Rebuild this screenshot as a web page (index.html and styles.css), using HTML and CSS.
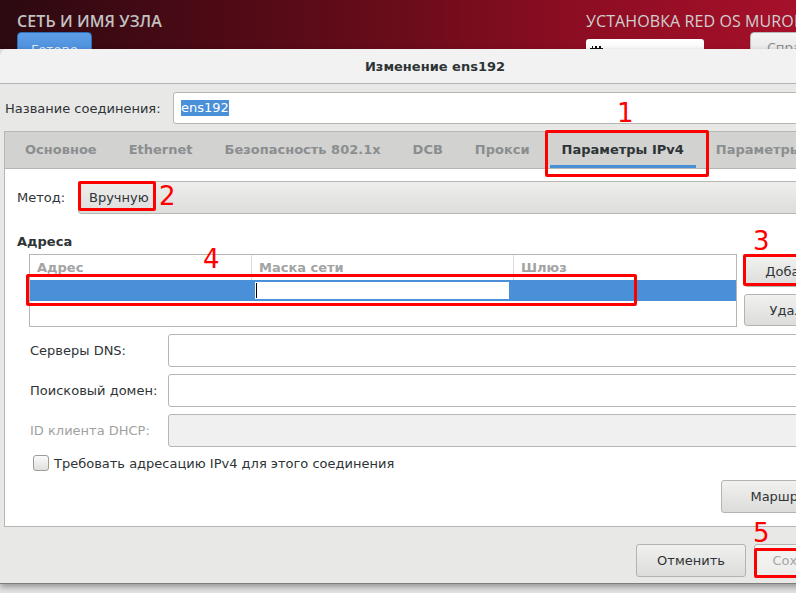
FILE: index.html
```html
<!DOCTYPE html>
<html lang="ru">
<head>
<meta charset="utf-8">
<title>Изменение ens192</title>
<link rel="stylesheet" href="styles.css">
</head>
<body>
<div class="screen">
  <header class="topbar">
    <div class="top-left">
      <div class="spoke-title">СЕТЬ И ИМЯ УЗЛА</div>
      <div class="done-btn">Готово</div>
    </div>
    <div class="top-right">
      <div class="install-title">УСТАНОВКА RED OS MURON 7.3</div>
      <div class="top-right-row">
        <div class="kbd-field"><span class="kbd-icon"></span></div>
        <div class="help-btn">Справка!</div>
      </div>
    </div>
  </header>

  <div class="dialog">
    <div class="titlebar">Изменение ens192</div>
    <div class="dialog-body">
      <div class="name-row">
        <label class="name-label">Название соединения:</label>
        <div class="entry name-entry"><span class="selected-text">ens192</span></div>
      </div>

      <div class="notebook">
        <div class="tabs">
          <div class="tab">Основное</div>
          <div class="tab">Ethernet</div>
          <div class="tab">Безопасность 802.1x</div>
          <div class="tab">DCB</div>
          <div class="tab">Прокси</div>
          <div class="tab active">Параметры IPv4</div>
          <div class="tab">Параметры IPv6</div>
        </div>
        <div class="page">
          <div class="method-row">
            <span class="method-label">Метод:</span>
            <div class="combo">Вручную</div>
          </div>

          <div class="section-title">Адреса</div>
          <div class="addr-block">
            <div class="addr-table">
              <div class="addr-head">
                <div class="col c1">Адрес</div>
                <div class="col c2">Маска сети</div>
                <div class="col c3">Шлюз</div>
              </div>
              <div class="addr-row">
                <div class="cell c1"></div>
                <div class="cell c2"><div class="cell-edit"><span class="caret"></span></div></div>
                <div class="cell c3"></div>
              </div>
            </div>
            <div class="addr-buttons">
              <button class="btn addr-btn">Добавить</button>
              <button class="btn addr-btn del">Удалить</button>
            </div>
          </div>

          <div class="field-row first">
            <span class="field-label">Серверы DNS:</span>
            <div class="entry field-entry"></div>
          </div>
          <div class="field-row">
            <span class="field-label">Поисковый домен:</span>
            <div class="entry field-entry"></div>
          </div>
          <div class="field-row">
            <span class="field-label disabled">ID клиента DHCP:</span>
            <div class="entry field-entry disabled"></div>
          </div>

          <div class="check-row">
            <span class="checkbox"></span>
            <span class="check-label">Требовать адресацию IPv4 для этого соединения</span>
          </div>

          <div class="routes-row">
            <button class="btn routes-btn">Маршруты</button>
          </div>
        </div>
      </div>

      <div class="actions">
        <button class="btn action-btn">Отменить</button>
        <button class="btn action-btn save">Сохранить</button>
      </div>
    </div>
  </div>

  <div class="mark box1"></div>
  <div class="num n1">1</div>
  <div class="mark box2"></div>
  <div class="num n2">2</div>
  <div class="mark box3"></div>
  <div class="num n3">3</div>
  <div class="mark box4"></div>
  <div class="num n4">4</div>
  <div class="mark box5"></div>
  <div class="num n5">5</div>
</div>
</body>
</html>
```

FILE: styles.css
```css
* { box-sizing: border-box; }
html, body { margin: 0; padding: 0; }
body {
  width: 796px;
  height: 593px;
  overflow: hidden;
  background: #e4e4e4;
  font-family: "DejaVu Sans", sans-serif;
  font-size: 13px;
  color: #2e3436;
}
button { font: inherit; margin: 0; }

.screen {
  position: relative;
  width: 796px;
  height: 593px;
  overflow: hidden;
}

/* ---------- installer header ---------- */
.topbar {
  height: 49px;
  overflow: hidden;
  display: flex;
  background: linear-gradient(90deg, #2c0910 0%, #4a0a15 25%, #6a0c1a 50%, #8c0d22 72%, #a6102a 100%);
}
.top-left {
  flex: none;
  width: 586px;
  padding: 11px 0 0 17px;
}
.spoke-title {
  font-family: "Open Sans", sans-serif;
  font-weight: 600;
  font-size: 16px;
  line-height: 20px;
  color: #c2c2c2;
  letter-spacing: 0.1px;
}
.done-btn {
  margin-top: 1px;
  width: 75px;
  height: 34px;
  border: 1px solid #2f6db5;
  border-radius: 4px;
  background: linear-gradient(#5d9ee6, #3f82d2);
  color: #dfe8f3;
  font-family: "Open Sans", sans-serif;
  font-size: 14px;
  line-height: 16px;
  padding-top: 9px;
  text-align: center;
}
.top-right {
  flex: 1;
  min-width: 0;
  padding-top: 11px;
  white-space: nowrap;
  overflow: hidden;
}
.install-title {
  font-family: "Open Sans", sans-serif;
  font-size: 16px;
  letter-spacing: 0.1px;
  line-height: 20px;
  color: #cfcfcf;
}
.top-right-row {
  display: flex;
  align-items: flex-start;
  margin-top: 1px;
}
.kbd-field {
  flex: none;
  margin-top: 7px;
  width: 118px;
  height: 30px;
  background: linear-gradient(#ffffff, #ededed);
  border-radius: 3px;
  padding: 7px 0 0 4px;
}
.kbd-icon {
  display: block;
  width: 13px;
  height: 8px;
  background: #111;
  border-top: 2px dotted #fff;
}
.help-btn {
  flex: none;
  margin-left: 46px;
  width: 90px;
  height: 34px;
  border: 1px solid #b8b8b8;
  border-radius: 4px;
  background: linear-gradient(#f4f4f4, #dedede);
  color: #8a8a8a;
  font-family: "Open Sans", sans-serif;
  font-size: 14px;
  line-height: 16px;
  padding: 7px 0 0 16px;
}

/* ---------- dialog ---------- */
.dialog {
  width: 870px;
  height: 535px;
  display: flex;
  flex-direction: column;
  background: #e8e8e7;
  border-radius: 7px 7px 0 0;
  border-bottom: 1px solid #7d7d7d;
  box-shadow: 0 3px 6px rgba(0, 0, 0, 0.35);
  position: relative;
}
.titlebar {
  height: 35px;
  flex: none;
  background: #f2f2f2;
  border-radius: 7px 7px 0 0;
  border-bottom: 1px solid #b4b4b4;
  text-align: center;
  font-weight: 700;
  font-size: 13px;
  line-height: 36px;
  color: #2e3436;
}
.dialog-body {
  flex: 1;
  display: flex;
  flex-direction: column;
  padding-top: 8px;
}

.name-row {
  display: flex;
  align-items: center;
  height: 32px;
  padding-left: 5px;
  padding-right: 6px;
}
.name-label { width: 168px; }
.entry {
  background: #fff;
  border: 1px solid #b6b6b3;
  border-radius: 3px;
}
.name-entry {
  flex: 1;
  height: 32px;
  padding-left: 7px;
  display: flex;
  align-items: center;
}
.selected-text {
  background: #4a90d9;
  color: #fff;
  line-height: 16px;
}

/* ---------- notebook ---------- */
.notebook {
  margin: 7px 4px 0 4px;
  border: 1px solid #b6b6b3;
  display: flex;
  flex-direction: column;
}
.tabs {
  height: 37px;
  display: flex;
  gap: 8px;
  padding-left: 8px;
  background: #d2d2d1;
  border-bottom: 1px solid #b6b6b3;
  overflow: hidden;
  white-space: nowrap;
}
.tab {
  padding: 0 12px;
  line-height: 36px;
  font-weight: 700;
  color: #8b8e8f;
  flex: none;
}
.tab.active {
  color: #2e3436;
  box-shadow: inset 0 -3px 0 #4a90d9;
}
.page {
  height: 357px;
  background: #fff;
  padding: 12px 12px 0 12px;
  display: flex;
  flex-direction: column;
}

.method-row {
  display: flex;
  align-items: center;
  height: 33px;
}
.method-label { width: 61px; }
.combo {
  flex: 1;
  height: 33px;
  border: 1px solid #b6b6b3;
  border-radius: 3px;
  background: linear-gradient(#eeeeed, #dddddc);
  padding-left: 10px;
  line-height: 31px;
}

.section-title {
  margin-top: 19px;
  font-weight: 700;
  line-height: 17px;
}

.addr-block {
  margin-top: 4px;
  margin-left: 12px;
  display: flex;
  gap: 7px;
}
.addr-table {
  width: 708px;
  height: 73px;
  border: 1px solid #b6b6b3;
  background: #fff;
}
.addr-head {
  display: flex;
  height: 25px;
}
.col {
  font-weight: 700;
  color: #a2a4a4;
  line-height: 25px;
  padding-left: 7px;
}
.c1 { width: 221px; }
.c2 { width: 262px; }
.c3 { flex: 1; }
.col.c2, .col.c3 { border-left: 1px solid #dcdcdc; }
.addr-row {
  display: flex;
  height: 21px;
  background: #4a90d9;
}
.cell.c2 { padding: 2px 3px 2px 4px; }
.cell-edit {
  background: #fff;
  height: 17px;
  width: 254px;
  padding: 1px 0 0 1px;
}
.caret {
  display: block;
  width: 1px;
  height: 15px;
  background: #000;
}
.addr-buttons {
  padding-top: 2px;
  display: flex;
  flex-direction: column;
  gap: 7px;
}
.btn {
  border: 1px solid #b3b3b0;
  border-radius: 3px;
  background: linear-gradient(#f1f1f0, #dcdcdb);
  color: #2e3436;
  text-align: center;
  padding: 0;
}
.addr-btn { width: 108px; height: 31px; }
.addr-btn.del { height: 32px; }

.field-row {
  display: flex;
  align-items: center;
  height: 33px;
  margin-top: 7px;
  padding-left: 13px;
}
.field-label { width: 138px; }
.field-label.disabled { color: #a0a2a2; }
.field-entry { flex: 1; height: 33px; }
.field-entry.disabled { background: #f0f0f0; }

.check-row {
  margin-top: 8px;
  padding-left: 16px;
  display: flex;
  align-items: center;
  height: 16px;
  gap: 5px;
}
.checkbox {
  width: 16px;
  height: 16px;
  border: 1px solid #9c9c9a;
  border-radius: 3px;
  background: linear-gradient(#fafafa, #e0e0df);
}

.routes-row {
  margin-top: 9px;
  display: flex;
  justify-content: flex-end;
}
.routes-btn { width: 132px; height: 33px; }

.actions {
  display: flex;
  justify-content: flex-end;
  gap: 8px;
  padding: 17px 6px 0 0;
}
.action-btn { width: 110px; height: 33px; }
.action-btn.save {
  color: #a4a6a6;
  background: linear-gradient(#f6f6f5, #ececeb);
}

/* ---------- red annotations (overlay) ---------- */
.mark {
  position: absolute;
  border: 3px solid #ff0000;
  border-radius: 2px;
}
.box1 { left: 545px; top: 130px; width: 164px; height: 47px; }
.box2 { left: 78px; top: 181px; width: 78px; height: 30px; }
.box3 { left: 743px; top: 254px; width: 80px; height: 32px; }
.box4 { left: 26px; top: 274px; width: 611px; height: 32px; }
.box5 { left: 754px; top: 548px; width: 80px; height: 30px; }
.num {
  position: absolute;
  font-family: "DejaVu Sans", sans-serif;
  font-size: 26px;
  line-height: 26px;
  color: #ff0000;
}
.n1 { left: 617px; top: 100px; }
.n2 { left: 159px; top: 183px; }
.n3 { left: 753px; top: 228px; }
.n4 { left: 203px; top: 246px; }
.n5 { left: 753px; top: 520px; }
```
